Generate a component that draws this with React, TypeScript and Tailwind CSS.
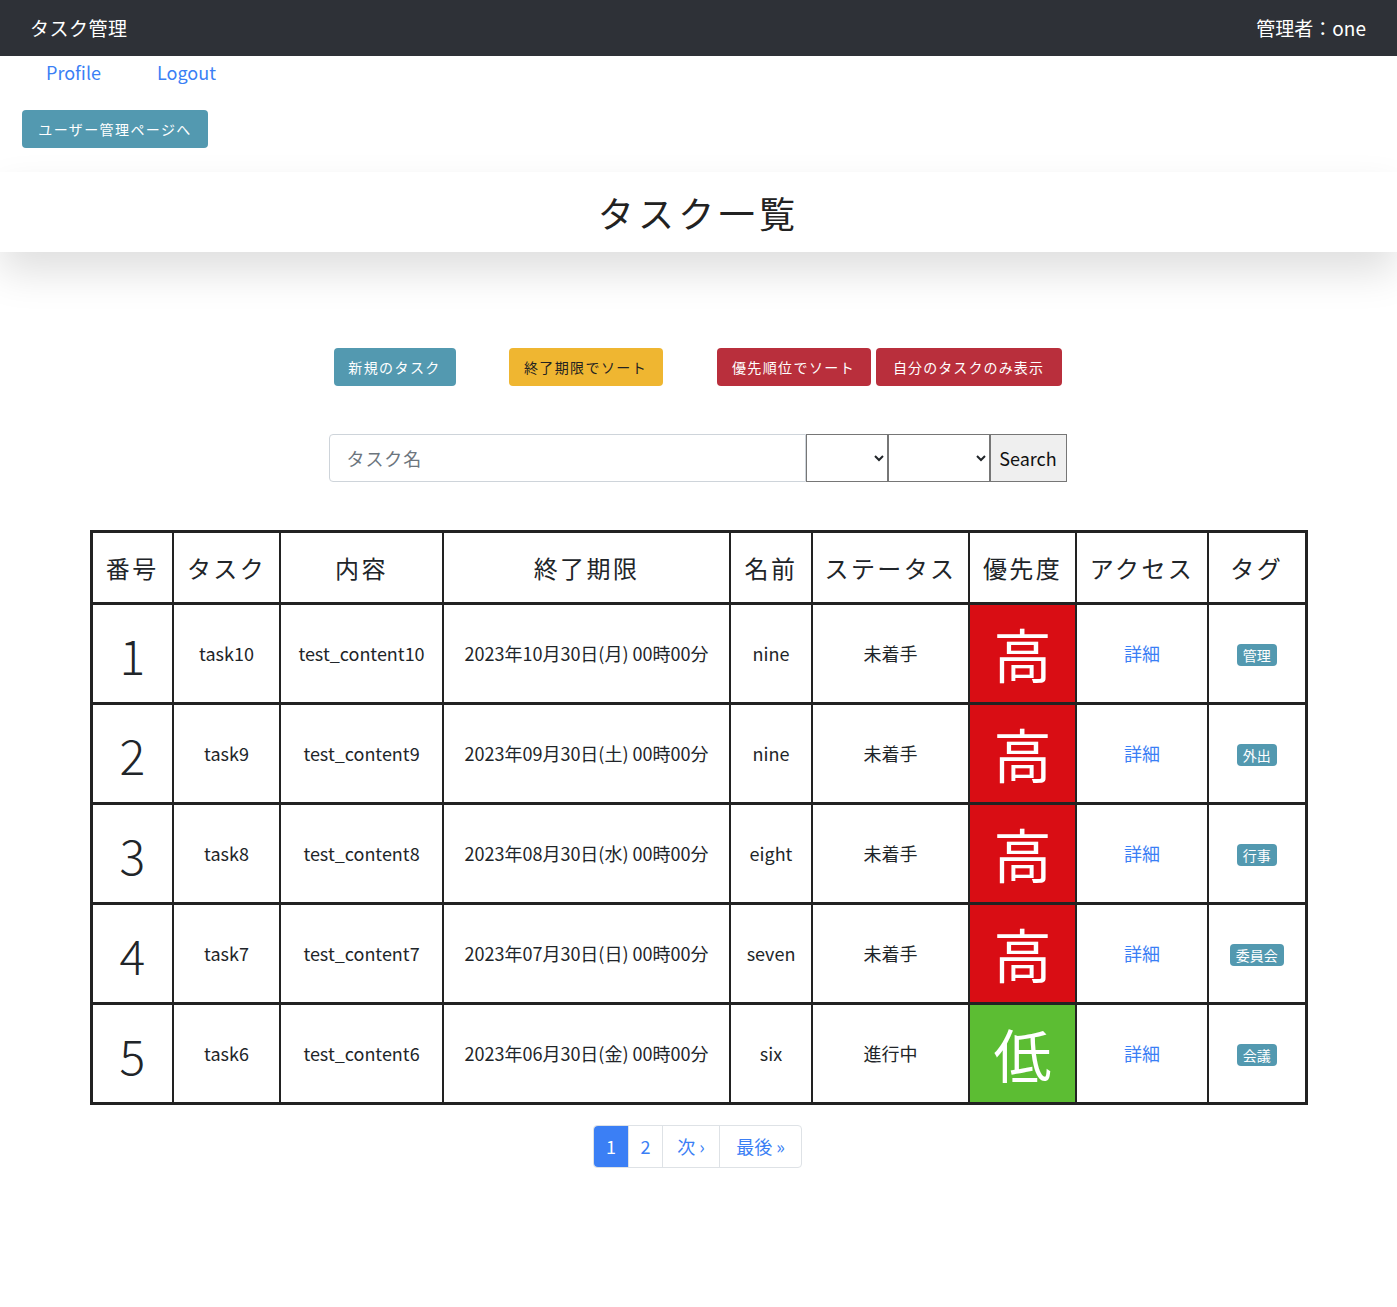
import React from "react";

const font = { fontFamily: '"Noto Sans CJK JP", "Noto Sans", sans-serif' };

const rows = [
  { no: 1, task: "task10", content: "test_content10", due: "2023年10月30日(月) 00時00分", name: "nine", status: "未着手", high: true, tag: "管理" },
  { no: 2, task: "task9", content: "test_content9", due: "2023年09月30日(土) 00時00分", name: "nine", status: "未着手", high: true, tag: "外出" },
  { no: 3, task: "task8", content: "test_content8", due: "2023年08月30日(水) 00時00分", name: "eight", status: "未着手", high: true, tag: "行事" },
  { no: 4, task: "task7", content: "test_content7", due: "2023年07月30日(日) 00時00分", name: "seven", status: "未着手", high: true, tag: "委員会" },
  { no: 5, task: "task6", content: "test_content6", due: "2023年06月30日(金) 00時00分", name: "six", status: "進行中", high: false, tag: "会議" },
];

const headers = ["番号", "タスク", "内容", "終了期限", "名前", "ステータス", "優先度", "アクセス", "タグ"];
const widths = ["w-[82px]", "w-[107px]", "w-[163px]", "w-[287px]", "w-[82px]", "w-[157px]", "w-[107px]", "w-[132px]", "w-[98px]"];

export default function App() {
  return (
    <div className="min-h-screen bg-white text-[#212529]" style={font}>
      {/* Navbar */}
      <nav className="h-14 bg-[#2e3137] flex items-center justify-between px-[30px]">
        <span className="text-white text-[19px] tracking-wide">タスク管理</span>
        <span className="text-white text-[19px] pr-[1px]">管理者：one</span>
      </nav>

      <div className="flex h-[32px] items-center pl-[46px] gap-[56px] text-[18px] text-[#3b7ff5]">
        <a href="#">Profile</a>
        <a href="#">Logout</a>
      </div>

      <div className="pl-[22px] pt-[22px] pb-[24px]">
        <button className="h-[38px] w-[186px] rounded bg-[#5399b0] text-white text-[14px] tracking-[0.1em]">
          ユーザー管理ページへ
        </button>
      </div>

      {/* Title */}
      <div className="relative h-[80px] bg-white flex items-center justify-center shadow-[0_20px_40px_rgba(0,0,0,0.13)]">
        <h1 className="text-[36px] tracking-[0.12em] text-[#222]">タスク一覧</h1>
      </div>

      {/* Action buttons */}
      <div className="mt-[96px] flex justify-center text-[14px]">
        <div className="flex items-center ml-[-2px]">
          <button className="h-[38px] w-[122px] rounded bg-[#5399b0] text-white tracking-[0.1em]">新規のタスク</button>
          <button className="ml-[53px] h-[38px] w-[154px] rounded bg-[#efb631] text-[#222] tracking-[0.1em]">終了期限でソート</button>
          <button className="ml-[54px] h-[38px] w-[154px] rounded bg-[#b92f3c] text-white tracking-[0.1em]">優先順位でソート</button>
          <button className="ml-[5px] h-[38px] w-[186px] rounded bg-[#b92f3c] text-white tracking-[0.08em]">自分のタスクのみ表示</button>
        </div>
      </div>

      {/* Search */}
      <div className="mt-[48px] flex justify-center">
        <div className="flex h-[48px] ml-[-2px]">
          <input
            placeholder="タスク名"
            className="w-[477px] h-full rounded-l border border-[#ced4da] px-[17px] text-[18px] tracking-wider placeholder:text-[#6c757d]"
          />
          <select className="w-[82px] h-full border border-[#767676] bg-white text-[14px]"></select>
          <select className="w-[102px] h-full border border-[#767676] bg-white text-[14px]"></select>
          <button className="w-[77px] h-full border border-[#767676] bg-[#efefef] text-[18px] text-[#111]">Search</button>
        </div>
      </div>

      {/* Table */}
      <div className="mt-[48px] flex justify-center">
        <table className="border-collapse border-[3px] border-[#222] text-center">
          <thead>
            <tr className="h-[72px] border-b-[3px] border-[#222]">
              {headers.map((h, i) => (
                <th key={h} className={`${widths[i]} border-x-2 border-[#222] text-[24px] font-normal tracking-[0.1em]`}>
                  {h}
                </th>
              ))}
            </tr>
          </thead>
          <tbody>
            {rows.map((r) => (
              <tr key={r.no} className="h-[100px] border-b-[3px] border-[#222] text-[18px]">
                <td className="border-x-2 border-[#222] text-[48px] font-light">{r.no}</td>
                <td className="border-x-2 border-[#222]">{r.task}</td>
                <td className="border-x-2 border-[#222]">{r.content}</td>
                <td className="border-x-2 border-[#222]">{r.due}</td>
                <td className="border-x-2 border-[#222]">{r.name}</td>
                <td className="border-x-2 border-[#222]">{r.status}</td>
                <td
                  className={`border-x-2 border-[#222] text-[58px] text-white ${
                    r.high ? "bg-[#d90d14]" : "bg-[#5cbd33]"
                  }`}
                >
                  {r.high ? "高" : "低"}
                </td>
                <td className="border-x-2 border-[#222] text-[#3b7ff5]">
                  <a href="#">詳細</a>
                </td>
                <td className="border-x-2 border-[#222]">
                  <span className="inline-block rounded bg-[#5399b0] px-[6px] py-[1px] text-[14px] leading-[20px] text-white">
                    {r.tag}
                  </span>
                </td>
              </tr>
            ))}
          </tbody>
        </table>
      </div>

      {/* Pagination */}
      <div className="mt-[20px] flex justify-center pb-[140px]">
        <ul className="flex h-[43px] text-[18px] text-[#3b7ff5] border border-[#dee2e6] rounded ml-[-2px]">
          <li className="w-[34px] flex items-center justify-center bg-[#3b7ff5] text-white rounded-l">1</li>
          <li className="w-[34px] flex items-center justify-center border-l border-[#dee2e6]">2</li>
          <li className="w-[57px] flex items-center justify-center border-l border-[#dee2e6]">次 ›</li>
          <li className="w-[82px] flex items-center justify-center border-l border-[#dee2e6]">最後 »</li>
        </ul>
      </div>
    </div>
  );
}
